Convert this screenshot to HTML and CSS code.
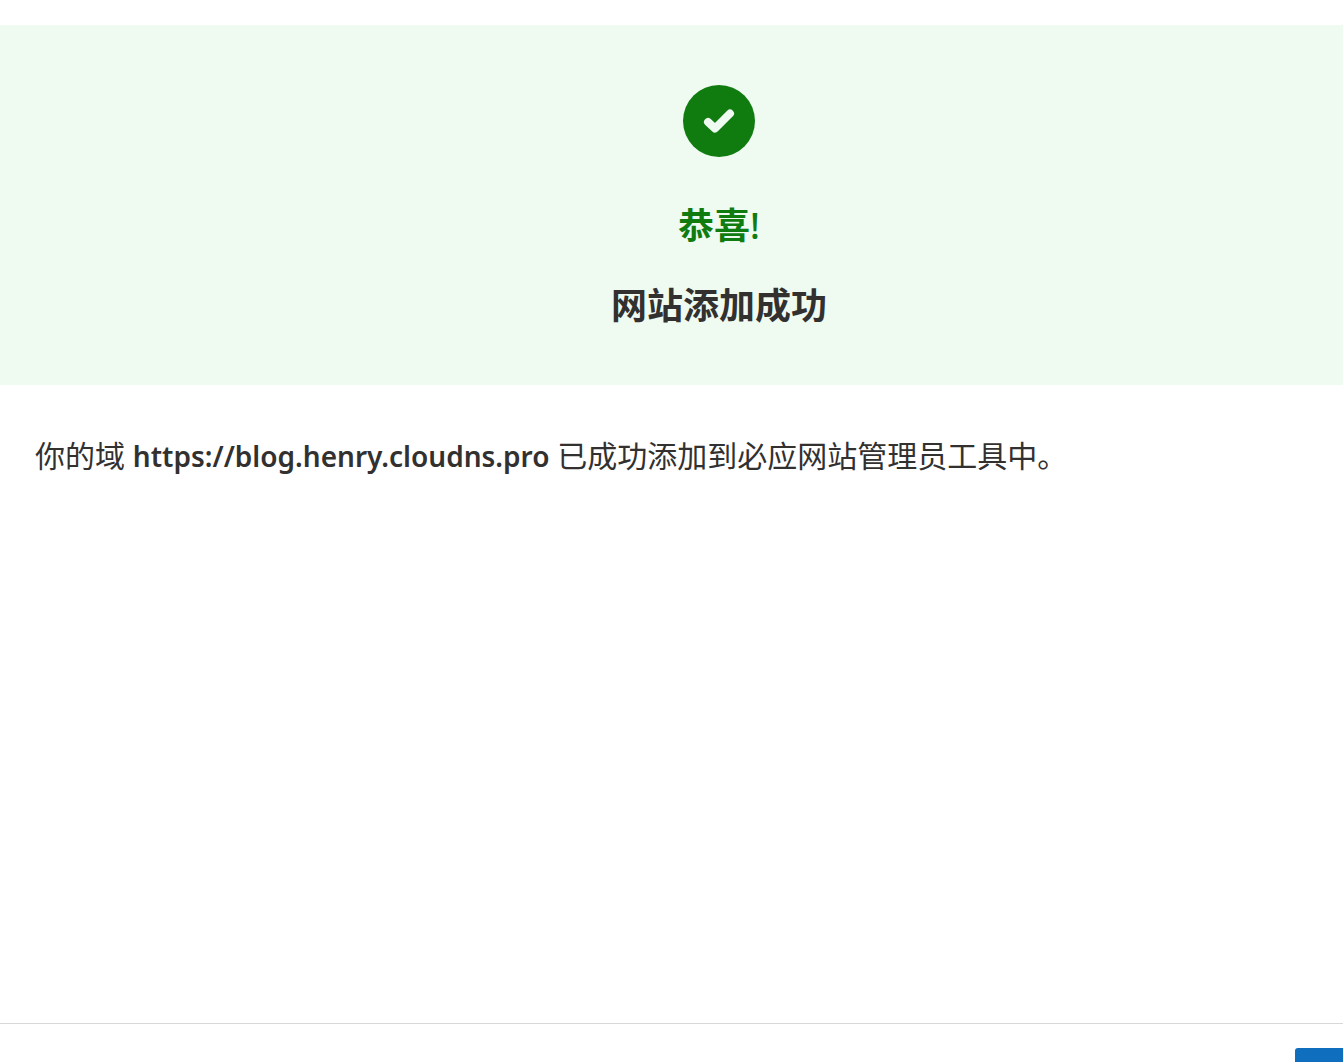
FILE: index.html
```html
<!DOCTYPE html>
<html lang="zh-CN">
<head>
    <meta charset="UTF-8">
    <meta name="viewport" content="width=device-width, initial-scale=1.0">
    <title>网站添加成功</title>
    <link rel="stylesheet" href="styles.css">
</head>
<body>
    <div class="panel">
        <!-- Success banner -->
        <header class="banner">
            <svg class="banner-icon" viewBox="0 0 72 72" aria-hidden="true">
                <circle cx="36" cy="36" r="36" fill="#107c10"/>
                <path d="M25 37 L32 43.5 L47 28.5" fill="none" stroke="#effaf1" stroke-width="8" stroke-linecap="round" stroke-linejoin="round"/>
            </svg>
            <h1 class="congrats">恭喜<span class="mark">!</span></h1>
            <h2 class="result">网站添加成功</h2>
        </header>

        <main class="content">
            <p>你的域 <strong>https://blog.henry.cloudns.pro</strong> 已成功添加到必应网站管理员工具中。</p>
        </main>

        <!-- Actions -->
        <footer class="footer">
            <button type="button" class="done-btn" aria-label="完成"></button>
        </footer>
    </div>
</body>
</html>
```
FILE: styles.css
```css
* {
    box-sizing: border-box;
}

body {
    margin: 0;
    background: #ffffff;
    color: #323130;
    font-family: "Noto Sans", "Noto Sans CJK SC", sans-serif;
}

.panel {
    display: flex;
    flex-direction: column;
    height: 100vh;
    padding-top: 25px;
    overflow: hidden;
}

.banner {
    display: flex;
    flex-direction: column;
    align-items: center;
    padding: 60px 0 55px 95px;
    background: #effaf1;
}

.banner-icon {
    width: 72px;
    height: 72px;
    margin-bottom: 45px;
}

.congrats,
.result {
    margin: 0;
    font-size: 36px;
    line-height: 48px;
    font-weight: 700;
}

.congrats {
    margin-bottom: 32px;
    color: #107c10;
}

.mark {
    font-weight: 500;
}

.content {
    flex: 1;
    padding: 49px 35px;
}

.content p {
    margin: 0;
    font-size: 30px;
    line-height: 44px;
    font-weight: 400;
}

.content strong {
    font-size: 28px;
    font-weight: 600;
}

.footer {
    display: flex;
    justify-content: flex-end;
    align-items: flex-start;
    height: 39px;
    padding-top: 24px;
    border-top: 1px solid #d8d8d8;
}

/* the button runs past the right edge of the panel */
.done-btn {
    flex: none;
    width: 96px;
    height: 48px;
    margin-right: -48px;
    border: none;
    border-radius: 3px;
    background: #106ebe;
    cursor: pointer;
}
```
